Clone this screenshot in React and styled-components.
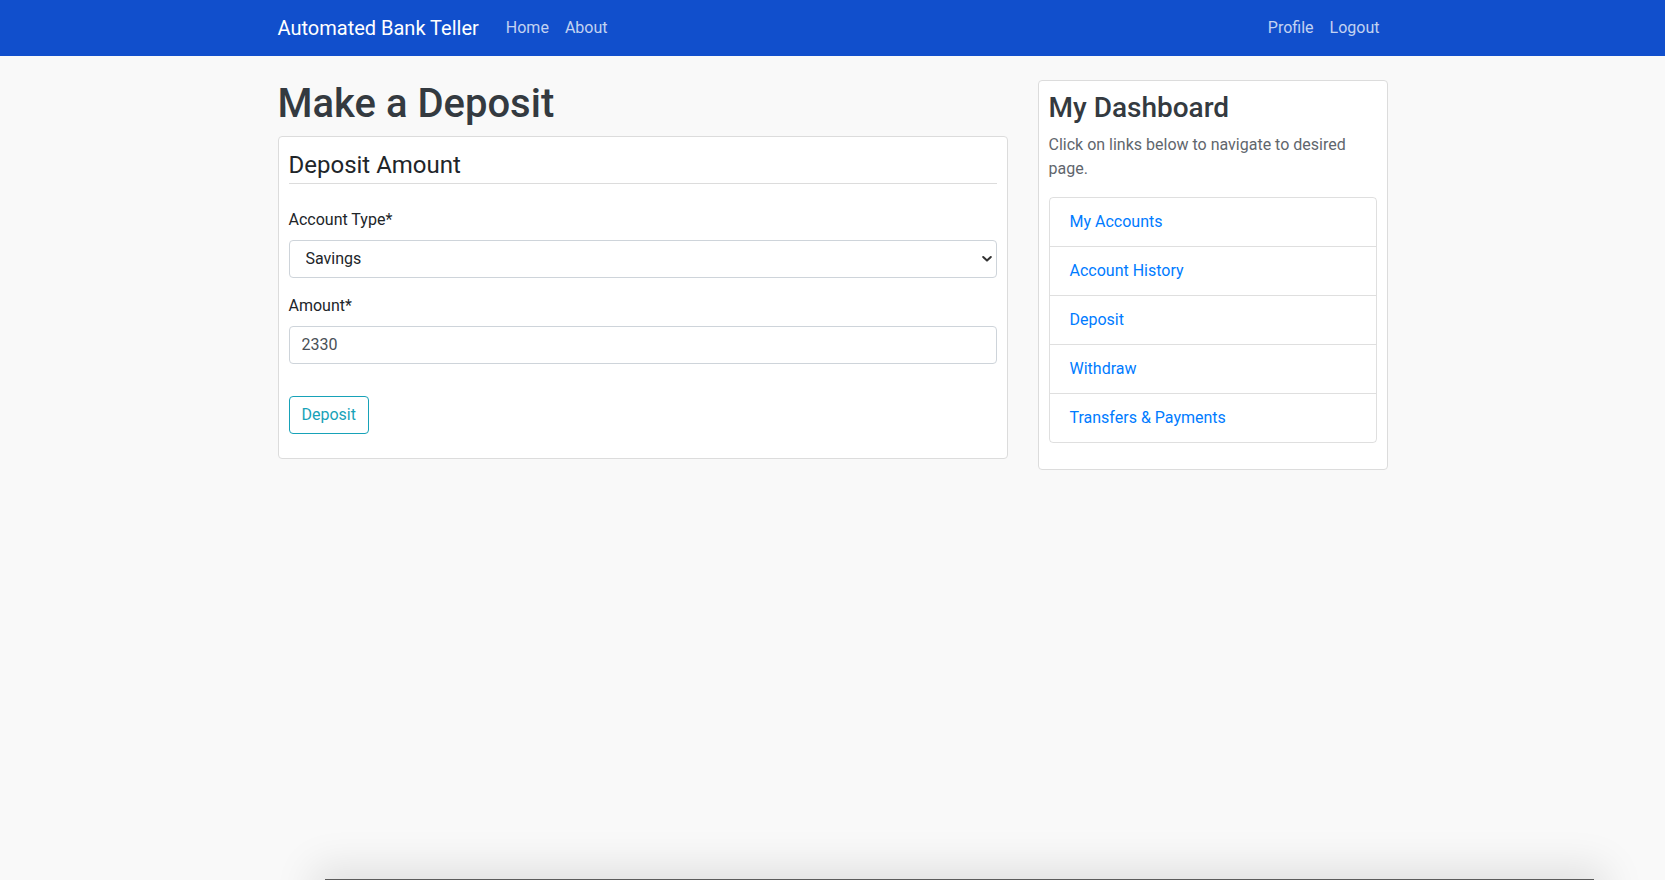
import React from "react";
import styled, { createGlobalStyle } from "styled-components";

const GlobalStyle = createGlobalStyle`
  body {
    margin: 0;
    background: #f9f9f9;
    font-family: Roboto, "Noto Sans", "Liberation Sans", sans-serif;
    font-size: 16px;
    line-height: 1.5;
    color: #212529;
  }
  * {
    box-sizing: border-box;
  }
`;

const chevron =
  "data:image/svg+xml;utf8,<svg xmlns='http://www.w3.org/2000/svg' width='10' height='8' viewBox='0 0 10 8'><path d='M1.2 2 L5 5.6 L8.8 2' fill='none' stroke='%23333' stroke-width='2' stroke-linecap='round' stroke-linejoin='round'/></svg>";

const dashboardLinks = [
  "My Accounts",
  "Account History",
  "Deposit",
  "Withdraw",
  "Transfers & Payments",
];

const App = () => (
  <>
    <GlobalStyle />
    <Navbar>
      <Container className="nav">
        <Brand href="#">Automated Bank Teller</Brand>
        <NavList>
          <NavLink href="#">Home</NavLink>
          <NavLink href="#">About</NavLink>
        </NavList>
        <NavList $right>
          <NavLink href="#">Profile</NavLink>
          <NavLink href="#">Logout</NavLink>
        </NavList>
      </Container>
    </Navbar>

    <Main>
      <section>
        <PageTitle>Make a Deposit</PageTitle>
        <Card>
          <CardHeader>Deposit Amount</CardHeader>
          <Form onSubmit={(e) => e.preventDefault()}>
            <FormGroup>
              <Label htmlFor="accountType">Account Type*</Label>
              <Select id="accountType" defaultValue="savings">
                <option value="savings">Savings</option>
                <option value="checking">Checking</option>
              </Select>
            </FormGroup>
            <FormGroup>
              <Label htmlFor="amount">Amount*</Label>
              <Input id="amount" type="text" defaultValue="2330" />
            </FormGroup>
            <OutlineButton type="submit">Deposit</OutlineButton>
          </Form>
        </Card>
      </section>

      <Sidebar>
        <SideTitle>My Dashboard</SideTitle>
        <SideText>Click on links below to navigate to desired page.</SideText>
        <ListGroup>
          {dashboardLinks.map((link) => (
            <ListItem key={link} href="#">
              {link}
            </ListItem>
          ))}
        </ListGroup>
      </Sidebar>
    </Main>

    <BottomEdge />
  </>
);

const Navbar = styled.nav`
  background: #114fcc;
  height: 56px;
  .nav {
    display: flex;
    align-items: center;
    height: 100%;
  }
`;

const Container = styled.div`
  width: 1110px;
  margin: 0 auto;
`;

const Brand = styled.a`
  color: #fff;
  font-size: 20px;
  line-height: 30px;
  text-decoration: none;
  margin-right: 19px;
`;

const NavList = styled.div`
  display: flex;
  margin-left: ${(p) => (p.$right ? "auto" : "0")};
`;

const NavLink = styled.a`
  color: rgba(255, 255, 255, 0.75);
  text-decoration: none;
  padding: 0 8px;
  line-height: 24px;
`;

const Main = styled(Container)`
  margin-top: 24px;
  display: grid;
  grid-template-columns: 730px 350px;
  column-gap: 30px;
  align-items: start;
`;

const PageTitle = styled.h1`
  margin: 0 0 8px;
  font-size: 40px;
  font-weight: 500;
  line-height: 1.2;
  color: #343a40;
`;

const Card = styled.div`
  background: #fff;
  border: 1px solid #dcdcdc;
  border-radius: 4px;
  padding: 10px;
`;

const CardHeader = styled.h4`
  margin: 0;
  padding: 4px 0 3px;
  border-bottom: 1px solid #dcdcdc;
  font-size: 24px;
  font-weight: 400;
  line-height: 1.2;
  color: #212529;
`;

const Form = styled.form`
  padding: 24px 0 14px;
`;

const FormGroup = styled.div`
  margin-bottom: 16px;
`;

const Label = styled.label`
  display: block;
  margin-bottom: 8px;
`;

const fieldBase = `
  display: block;
  width: 100%;
  height: 38px;
  font: inherit;
  line-height: 24px;
  color: #495057;
  background-color: #fff;
  border: 1px solid #ced4da;
  border-radius: 4px;
  outline: none;
`;

const Select = styled.select`
  ${fieldBase}
  appearance: none;
  padding: 6px 28px 6px 16px;
  color: #212529;
  background-image: url("${chevron}");
  background-repeat: no-repeat;
  background-position: right 4px center;
  background-size: 10px 8px;
`;

const Input = styled.input`
  ${fieldBase}
  padding: 6px 12px;
`;

const OutlineButton = styled.button`
  margin-top: 16px;
  font: inherit;
  line-height: 24px;
  padding: 6px 12px;
  color: #17a2b8;
  background: transparent;
  border: 1px solid #17a2b8;
  border-radius: 4px;
  cursor: pointer;
`;

const Sidebar = styled(Card)``;

const SideTitle = styled.h3`
  margin: 0 0 8px;
  font-size: 28px;
  font-weight: 500;
  line-height: 1.2;
  color: #343a40;
`;

const SideText = styled.p`
  margin: 0 0 16px;
  color: #5f666d;
`;

const ListGroup = styled.div`
  display: flex;
  flex-direction: column;
  border: 1px solid rgba(0, 0, 0, 0.125);
  border-radius: 4px;
  margin-bottom: 16px;
`;

const ListItem = styled.a`
  display: block;
  padding: 12px 20px;
  color: #007bff;
  text-decoration: none;
  & + & {
    border-top: 1px solid rgba(0, 0, 0, 0.125);
  }
`;

const BottomEdge = styled.div`
  position: fixed;
  left: 325px;
  right: 71px;
  bottom: -30px;
  height: 31px;
  background: #5c5c5c;
  box-shadow: 0 0 40px 12px rgba(0, 0, 0, 0.1);
`;

export default App;
